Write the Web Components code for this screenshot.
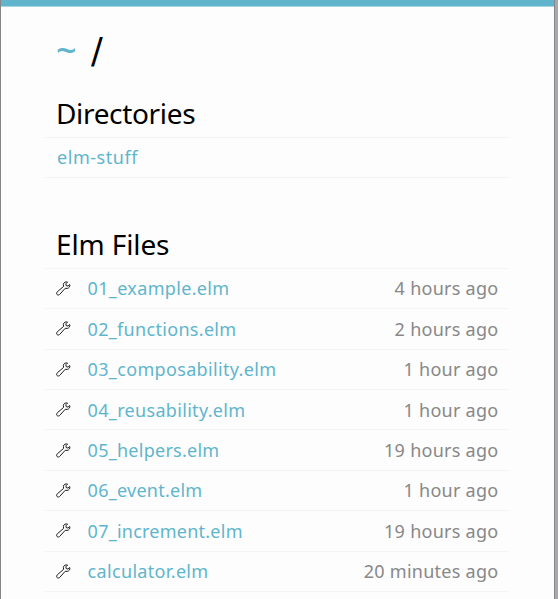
<!DOCTYPE html>
<html lang="en">
<head>
<meta charset="utf-8">
<title>~ /</title>
<style>
html, body { margin: 0; height: 100%; overflow: hidden; }
body { font-family: "Noto Sans", "Open Sans", sans-serif; color: #000; background: #a9a9ab; }
</style>
</head>
<body>
<elm-page>
  <page-title></page-title>
  <file-section heading="Directories" style="--hs:-.34px">
    <file-row name="elm-stuff" style="--ns:.55px"></file-row>
  </file-section>
  <file-section heading="Elm Files" style="--hs:-.12px">
    <file-row icon name="01_example.elm" age="4 hours ago" style="--ns:.34px"></file-row>
    <file-row icon name="02_functions.elm" age="2 hours ago" style="--ns:.31px"></file-row>
    <file-row icon name="03_composability.elm" age="1 hour ago" style="--ns:.34px"></file-row>
    <file-row icon name="04_reusability.elm" age="1 hour ago" style="--ns:.32px"></file-row>
    <file-row icon name="05_helpers.elm" age="19 hours ago" style="--ns:.26px"></file-row>
    <file-row icon name="06_event.elm" age="1 hour ago" style="--ns:.26px"></file-row>
    <file-row icon name="07_increment.elm" age="19 hours ago" style="--ns:.24px"></file-row>
    <file-row icon name="calculator.elm" age="20 minutes ago" style="--ns:.33px"></file-row>
  </file-section>
</elm-page>
<script>
class ShadowElement extends HTMLElement {
  constructor() {
    super();
    this.attachShadow({ mode: 'open' });
  }
  connectedCallback() { this.shadowRoot.innerHTML = this.render(); }
}

customElements.define('elm-page', class extends ShadowElement {
  render() {
    return `<style>
      :host { display: block; box-sizing: border-box; width: 555px; height: 100vh; overflow: hidden;
        background: #fdfdfd; border-left: 1px solid #858588; border-right: 1px solid #85888c; }
      .bar { height: 6px; background: #60b5cc; border-bottom: 1px solid #a9d6e3; }
      main { display: flex; flex-direction: column; width: 464px; margin-left: 44px; padding-top: 16px; }
    </style><div class="bar"></div><main><slot></slot></main>`;
  }
});

customElements.define('page-title', class extends ShadowElement {
  render() {
    return `<style>
      :host { display: block; height: 65px; padding-left: 11px; font-size: 36px; line-height: 54px; white-space: nowrap; }
      .home { color: #60b5cc; font-weight: 500; }
      .sep { font-family: "DejaVu Sans", sans-serif; font-size: 35px; margin-left: 14.5px; }
    </style><span class="home">~</span><span class="sep">/</span>`;
  }
});

customElements.define('file-section', class extends ShadowElement {
  render() {
    return `<style>
      :host { display: block; margin-bottom: 41px; }
      h2 { margin: 0; padding-left: 11px; height: 49.7px; line-height: 50px; font-size: 28px; font-weight: 400;
        letter-spacing: var(--hs); border-bottom: 1px solid #f4f4f4; box-sizing: border-box; }
      .rows { display: flex; flex-direction: column; }
    </style><h2>${this.getAttribute('heading')}</h2><div class="rows"><slot></slot></div>`;
  }
});

customElements.define('wrench-icon', class extends ShadowElement {
  render() {
    return `<style>:host { display: block; width: 15px; height: 15px; } svg { display: block; }</style>
    <svg width="15" height="15" viewBox="0 0 15 15" fill="none" stroke="#1c1c1c" stroke-width="1" stroke-linejoin="round">
      <path d="M11.6 1.1 C9.7 .4 7.5 1.4 7.4 3.4 L7.6 5.4 L1.3 10.8 C.2 12 .5 13.5 1.6 13.9 C2.5 14.2 3.4 13.8 4 13.1 L9.2 7.3 L11.2 7.4 C13 7.2 14.4 5.4 13.7 3.5 L12 5.1 L10.2 4.6 L9.9 2.8 Z"/>
    </svg>`;
  }
});

customElements.define('file-row', class extends ShadowElement {
  render() {
    const icon = this.hasAttribute('icon') ? '<wrench-icon></wrench-icon>' : '';
    const age = this.getAttribute('age');
    return `<style>
      :host { display: flex; align-items: center; box-sizing: border-box; height: 40.4px; padding: 0 10.5px 0 11px;
        border-bottom: 1px solid #f4f4f4; font-size: 18px; line-height: 38px; white-space: nowrap; }
      :host(:not([icon])) { padding-left: 12px; }
      wrench-icon { margin-right: 16.6px; }
      a { color: #60b5cc; text-decoration: none; letter-spacing: var(--ns); }
      time { margin-left: auto; color: #888; letter-spacing: .27px; }
    </style>${icon}<a>${this.getAttribute('name')}</a>${age ? `<time>${age}</time>` : ''}`;
  }
});
</script>
</body>
</html>
